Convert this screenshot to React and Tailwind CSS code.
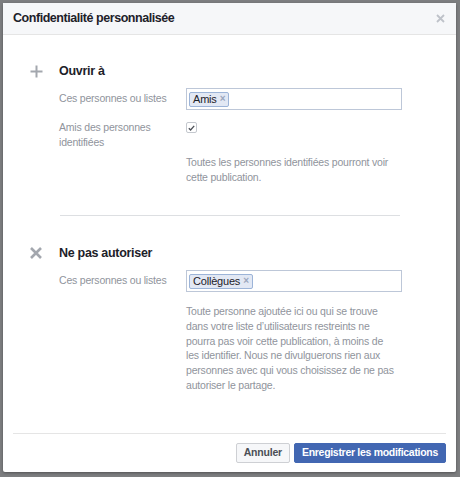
import React from 'react';

const small = 'text-[10.5px] tracking-[-0.2px]';

function Token({ label }) {
  return (
    <span className="inline-flex h-[15px] items-center gap-[3px] rounded-[2px] border border-[#9cb4d8] bg-[#e2e8f4] pl-[3px] pr-[3px] text-[11px] leading-none tracking-[-0.2px] text-[#1d2129]">
      {label}
      <span className="text-[10px] font-bold text-[#9aa6bd]">×</span>
    </span>
  );
}

function TokenInput({ label }) {
  return (
    <div className="flex h-[22px] w-[216px] items-center border border-[#bdc7d8] bg-white px-[2px]">
      <Token label={label} />
    </div>
  );
}

function PlusIcon() {
  return (
    <svg width="13" height="13" viewBox="0 0 13 13" className="mt-[3px]">
      <path d="M6.5 0.5v12M0.5 6.5h12" stroke="#a3a7ae" strokeWidth="2" />
    </svg>
  );
}

function CrossIcon() {
  return (
    <svg width="12" height="12" viewBox="0 0 12 12" className="mt-[3px]">
      <path d="M1 1l10 10M11 1L1 11" stroke="#a3a7ae" strokeWidth="2.6" />
    </svg>
  );
}

export default function App() {
  return (
    <div
      className="h-[477px] w-[460px] bg-[#7d7e80] pl-[3px] pt-[3px]"
      style={{ fontFamily: '"Liberation Sans", Arial, sans-serif' }}
    >
      <div className="flex h-[469px] w-[453px] flex-col rounded-[2px] bg-white shadow-[0_1px_3px_rgba(0,0,0,0.35)]">
        {/* header */}
        <div className="flex h-[32px] items-center justify-between border-b border-[#e5e5e5] bg-[#f6f7f9] pl-[10px] pr-[10px]">
          <span className="text-[12.5px] font-bold tracking-[-0.45px] text-[#1d2129]">Confidentialité personnalisée</span>
          <svg width="9" height="9" viewBox="0 0 9 9" className="mr-[1px]">
            <path d="M1 1l7 7M8 1L1 8" stroke="#bec2c9" strokeWidth="1.8" />
          </svg>
        </div>

        {/* body */}
        <div className="flex-1 pl-[27px] pt-[27px]">
          {/* section 1 */}
          <div className="flex">
            <div className="w-[29px]">
              <PlusIcon />
            </div>
            <div>
              <div className="text-[12.5px] font-bold leading-[18px] tracking-[-0.3px] text-[#1d2129]">Ouvrir à</div>
              <div className="mt-[8px] flex items-center">
                <div className={`w-[127px] ${small} text-[#90949c]`}>Ces personnes ou listes</div>
                <TokenInput label="Amis" />
              </div>
              <div className="mt-[10px] flex">
                <div className={`w-[127px] ${small} leading-[15px] text-[#90949c]`}>
                  Amis des personnes
                  <br />
                  identifiées
                </div>
                <div className="pt-[2px]">
                  <div className="flex h-[11px] w-[11px] items-center justify-center rounded-[2px] border border-[#c4c8ce] bg-white">
                    <svg width="7" height="6" viewBox="0 0 7 6">
                      <path d="M0.8 3.2l1.8 1.8L6.2 0.8" fill="none" stroke="#4b4f56" strokeWidth="1.3" />
                    </svg>
                  </div>
                </div>
              </div>
              <div className={`ml-[127px] mt-[5px] w-[212px] ${small} leading-[15px] text-[#90949c]`}>
                Toutes les personnes identifiées pourront voir cette publication.
              </div>
            </div>
          </div>

          <div className="ml-[30px] mt-[30px] w-[340px] border-t border-[#dddfe2]" />

          {/* section 2 */}
          <div className="mt-[28px] flex">
            <div className="w-[29px]">
              <CrossIcon />
            </div>
            <div>
              <div className="text-[12.5px] font-bold leading-[18px] tracking-[-0.3px] text-[#1d2129]">Ne pas autoriser</div>
              <div className="mt-[8px] flex items-center">
                <div className={`w-[127px] ${small} text-[#90949c]`}>Ces personnes ou listes</div>
                <TokenInput label="Collègues" />
              </div>
              <div className={`ml-[127px] mt-[12px] w-[212px] ${small} leading-[14.8px] text-[#90949c]`}>
                Toute personne ajoutée ici ou qui se trouve dans votre liste d’utilisateurs restreints ne pourra pas
                voir cette publication, à moins de les identifier. Nous ne divulguerons rien aux personnes avec qui
                vous choisissez de ne pas autoriser le partage.
              </div>
            </div>
          </div>
        </div>

        {/* footer */}
        <div className="mx-[10px] flex justify-end gap-[4px] border-t border-[#e5e5e5] pb-[9px] pt-[9px]">
          <button className="h-[20px] rounded-[2px] border border-[#ced0d4] bg-[#f6f7f9] px-[7px] text-[10.5px] font-bold tracking-[-0.2px] text-[#4b4f56]">
            Annuler
          </button>
          <button className="h-[20px] rounded-[2px] border border-[#4267b2] bg-[#4267b2] px-[7px] text-[10.5px] font-bold tracking-[-0.3px] text-white">
            Enregistrer les modifications
          </button>
        </div>
      </div>
    </div>
  );
}
